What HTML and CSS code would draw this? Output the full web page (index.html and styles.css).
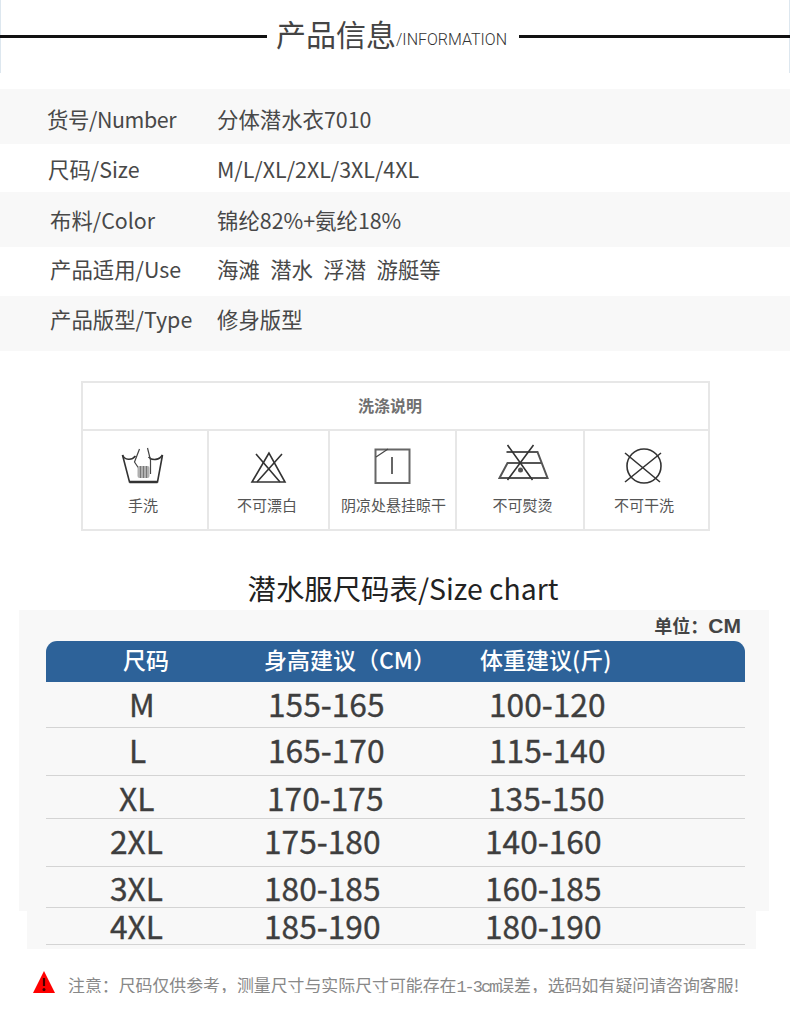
FILE: index.html
```html
<!DOCTYPE html>
<html lang="zh-CN">
<head>
<meta charset="utf-8">
<title>产品信息</title>
<link rel="stylesheet" href="styles.css">
</head>
<body>
<main class="page">
  <header class="info-head">
    <span class="rule rule-left"></span>
    <h1 class="info-title"><span class="info-cn">产品信息</span><span class="info-en">/INFORMATION</span></h1>
    <span class="rule"></span>
  </header>

  <section class="specs">
    <div class="spec spec-1"><span class="spec-key key-a">货号/Number</span><span class="spec-val">分体潜水衣7010</span></div>
    <div class="spec spec-2"><span class="spec-key key-b">尺码/Size</span><span class="spec-val">M/L/XL/2XL/3XL/4XL</span></div>
    <div class="spec spec-3"><span class="spec-key key-c">布料/Color</span><span class="spec-val">锦纶82%+氨纶18%</span></div>
    <div class="spec spec-4"><span class="spec-key key-c">产品适用/Use</span><span class="spec-val spaced">海滩 潜水 浮潜 游艇等</span></div>
    <div class="spec spec-5"><span class="spec-key key-c">产品版型/Type</span><span class="spec-val">修身版型</span></div>
  </section>

  <section class="care">
    <h2 class="care-title">洗涤说明</h2>
    <div class="care-grid">
      <div class="care-cell">
        <svg class="care-icon" viewBox="0.5 0 60 50" width="60" height="50">
          <path class="ln" d="M8 15 L15 42 H43 L48 15"/>
          <path class="thick" d="M15 42 H43"/>
          <path class="ln" d="M8 15 C10 20 17 21 21 16 M34 17 C38 21 45 20 48 15"/>
          <path class="ln thin" d="M25 9 L20 22 L24 28 M33 8 L36 20 V34"/>
          <rect class="fill" x="23" y="26" width="12" height="12" rx="2"/>
          <path class="stripes" d="M26 26 V38 M29 26 V38 M32 26 V38"/>
        </svg>
        <span class="care-label">手洗</span>
      </div>
      <div class="care-cell">
        <svg class="care-icon" viewBox="-1 0 60 50" width="60" height="50">
          <path class="ln" d="M16 14 L40 42 M42 14 L17 42"/>
          <path class="ln" d="M29 13 L12 42 H45 Z"/>
        </svg>
        <span class="care-label">不可漂白</span>
      </div>
      <div class="care-cell">
        <svg class="care-icon" viewBox="-2 0 60 50" width="60" height="50">
          <rect class="box" x="10.5" y="9.500" width="34" height="33.500"/>
          <path class="ln thin" d="M11 17 L23 9"/>
          <path class="mid" d="M27 17 V34"/>
        </svg>
        <span class="care-label">阴凉处悬挂晾干</span>
      </div>
      <div class="care-cell">
        <svg class="care-icon" viewBox="-4.500 0 60 50" width="60" height="50">
          <path class="iron" d="M12 12 H43 L53 38 H5 L13 23 H47"/>
          <path class="ln" d="M13 5 L38 40 M39 5 L13 40"/>
          <circle class="dot" cx="26" cy="30" r="2.500"/>
        </svg>
        <span class="care-label">不可熨烫</span>
      </div>
      <div class="care-cell">
        <svg class="care-icon" viewBox="2 0 60 50" width="60" height="50">
          <circle class="ln" cx="29" cy="26" r="17"/>
          <path class="ln" d="M10 13 L45 42 M46 13 L10 42"/>
        </svg>
        <span class="care-label">不可干洗</span>
      </div>
    </div>
  </section>

  <h2 class="chart-title">潜水服尺码表/Size chart</h2>

  <section class="chart">
    <div class="unit">单位：<span class="unit-en">CM</span></div>
    <div class="chart-head">
      <span>尺码</span><span>身高建议（CM）</span><span>体重建议(斤)</span>
    </div>
    <div class="size-row row-1 place-a"><span>M</span><span>155-165</span><span>100-120</span></div>
    <div class="size-row row-2 place-a"><span>L</span><span>165-170</span><span>115-140</span></div>
    <div class="size-row row-3 place-b"><span>XL</span><span>170-175</span><span>135-150</span></div>
    <div class="size-row row-4 place-c"><span>2XL</span><span>175-180</span><span>140-160</span></div>
    <div class="size-row row-5 place-c"><span>3XL</span><span>180-185</span><span>160-185</span></div>
    <div class="size-row row-6 place-c"><span>4XL</span><span>185-190</span><span>180-190</span></div>
  </section>

  <footer class="note">
    <svg class="warn" viewBox="0 0 22 22" width="22" height="22">
      <path class="warn-tri" d="M11 0 L22 22 H0 Z"/>
      <path class="warn-bar" d="M11 7 V15"/>
      <circle class="warn-dot" cx="11" cy="18.500" r="1.500"/>
    </svg>
    <p class="note-text">注意：尺码仅供参考，测量尺寸与实际尺寸可能存在<span class="mono">1-3cm</span>误差，选码如有疑问请咨询客服!</p>
  </footer>
</main>
</body>
</html>
```
FILE: styles.css
```css
* { box-sizing: border-box; }
html, body { margin: 0; padding: 0; background: #fff; }
body {
  font-family: "Noto Sans CJK SC", "Noto Sans", sans-serif;
  color: #444;
}
.page { width: 790px; }
h1, h2, p { margin: 0; font-weight: 400; }

/* header */
.info-head {
  height: 73px;
  display: flex;
  align-items: center;
  border-left: 1px solid #dde7ef;
  border-right: 1px solid #dde7ef;
}
.rule { height: 2.500px; background: #111; flex: 1; }
.rule-left { flex: none; width: 267px; margin-left: -1px; }
.info-head .rule:last-child { margin-right: -1px; }
.info-title {
  display: flex;
  align-items: baseline;
  padding: 0 12px 8px 9px;
  color: #444;
  white-space: nowrap;
}
.info-cn { font-size: 30px; line-height: 40px; }
.info-en { font-size: 16px; position: relative; top: -1px; font-family: "Roboto", "Noto Sans", sans-serif; font-weight: 300; color: #333; }

/* specs */
.specs { margin-top: 16px; }
.spec {
  display: grid;
  grid-template-columns: 217px 1fr;
  align-items: center;
  font-size: 21.400px;
  line-height: 30px;
  color: #484848;
}
.spec-1, .spec-3, .spec-5 { height: 55px; background: #f8f8f8; }
.spec-1 { padding-top: 5px; }
.spec-2 { height: 48px; padding-top: 2px; }
.spec-3 { padding-top: 1px; }
.spec-4 { height: 49px; padding-bottom: 5px; }
.spec-5 { padding-bottom: 9px; }
.spec-key { white-space: nowrap; }
.key-a { padding-left: 47px; letter-spacing: -0.4px; }
.key-b { padding-left: 48px; }
.key-c { padding-left: 50px; }
.spec-val { white-space: nowrap; }
.spaced { word-spacing: 5.600px; }

/* care */
.care {
  width: 629px;
  height: 150px;
  margin: 30px 0 0 81px;
  border: 2px solid #e7e7e7;
  display: flex;
  flex-direction: column;
}
.care-title {
  height: 48px;
  flex: none;
  display: flex;
  align-items: center;
  justify-content: center;
  padding: 0 11px 2px 0;
  font-size: 16px;
  font-weight: 700;
  color: #707070;
  border-bottom: 2px solid #e7e7e7;
}
.care-grid {
  flex: 1;
  display: grid;
  grid-template-columns: 124px 121px 127px 128px 1fr;
}
.care-cell {
  display: flex;
  flex-direction: column;
  align-items: center;
  padding-top: 9px;
  border-left: 2px solid #e7e7e7;
}
.care-cell:first-child { border-left: 0; }
.care-icon { display: block; flex: none; }
.care-label { font-size: 15px; line-height: 22px; color: #555; margin-top: 4px; white-space: nowrap; }
.care-cell:nth-child(1) .care-label { margin-right: 4px; }
.care-cell:nth-child(2) .care-label { margin-right: 3px; }
.care-cell:nth-child(3) .care-label { margin-left: 2px; }
.care-cell:nth-child(4) .care-label { margin-left: 5px; }
.care-cell:nth-child(5) .care-label { margin-right: 5px; }

.ln { fill: none; stroke: #333; stroke-width: 1.600; }
.thin { stroke-width: 1.200; stroke: #444; }
.thick { fill: none; stroke: #333; stroke-width: 2.500; }
.fill { fill: #b0b0b0; }
.stripes { fill: none; stroke: #777; stroke-width: 1; }
.box { fill: none; stroke: #666; stroke-width: 2; }
.mid { fill: none; stroke: #666; stroke-width: 2; }
.iron { fill: none; stroke: #555; stroke-width: 2; }
.dot { fill: #555; }

/* chart */
.chart-title {
  margin-top: 39px;
  height: 40px;
  text-align: center;
  font-size: 28.400px;
  line-height: 36px;
  color: #222;
  padding-left: 16px;
  white-space: nowrap;
}
.chart {
  height: 339px;
  padding: 0 45px 0 46px;
  background:
    linear-gradient(#f8f8f8, #f8f8f8) 19px 0 / 750px 301px no-repeat,
    linear-gradient(#f8f8f8, #f8f8f8) 27px 301px / 729px 38px no-repeat;
}
.unit {
  height: 31px;
  padding: 1px 4px 0 0;
  text-align: right;
  font-size: 18px;
  line-height: 28px;
  font-weight: 700;
  color: #444;
}
.unit-en { font-family: "Liberation Sans", sans-serif; font-size: 21px; }
.chart-head {
  height: 41px;
  display: grid;
  grid-template-columns: 141px 216px 1fr;
  padding: 0 0 6px 77px;
  align-items: center;
  background: #2d6299;
  border-radius: 11px 11px 0 0;
  color: #fff;
  font-size: 23px;
  font-weight: 500;
  line-height: 32px;
  white-space: nowrap;
}
.size-row {
  display: grid;
  align-items: center;
  border-bottom: 1px solid #d4d4d4;
  font-size: 31.700px;
  line-height: 34px;
  color: #3e3e3e;
  -webkit-text-stroke: 0.35px #3e3e3e;
  white-space: nowrap;
}
.place-a { padding-left: 83px; grid-template-columns: 139px 221px 1fr; }
.place-b { padding-left: 73px; grid-template-columns: 148px 221px 1fr; }
.place-c { padding-left: 64px; grid-template-columns: 154px 221px 1fr; }
.row-1 { height: 46px; padding-bottom: 4px; }
.row-2 { height: 48px; padding-bottom: 6px; }
.row-3 { height: 43px; }
.row-4 { height: 48px; padding-bottom: 5px; }
.row-5 { height: 41px; }
.row-6 { height: 37px; padding-bottom: 2px; }

/* note */
.note {
  display: flex;
  align-items: center;
  height: 22px;
  margin: 22px 0 0 33px;
}
.warn { flex: none; }
.warn-tri { fill: #f00; }
.warn-bar { stroke: #400; stroke-width: 2.200; fill: none; }
.warn-dot { fill: #400; }
.note-text {
  margin: 8px 0 0 13px;
  font-size: 16.900px;
  line-height: 24px;
  color: #888;
  white-space: nowrap;
}
.mono { font-family: "Liberation Mono", monospace; font-size: 16.900px; letter-spacing: -2px; }
```
